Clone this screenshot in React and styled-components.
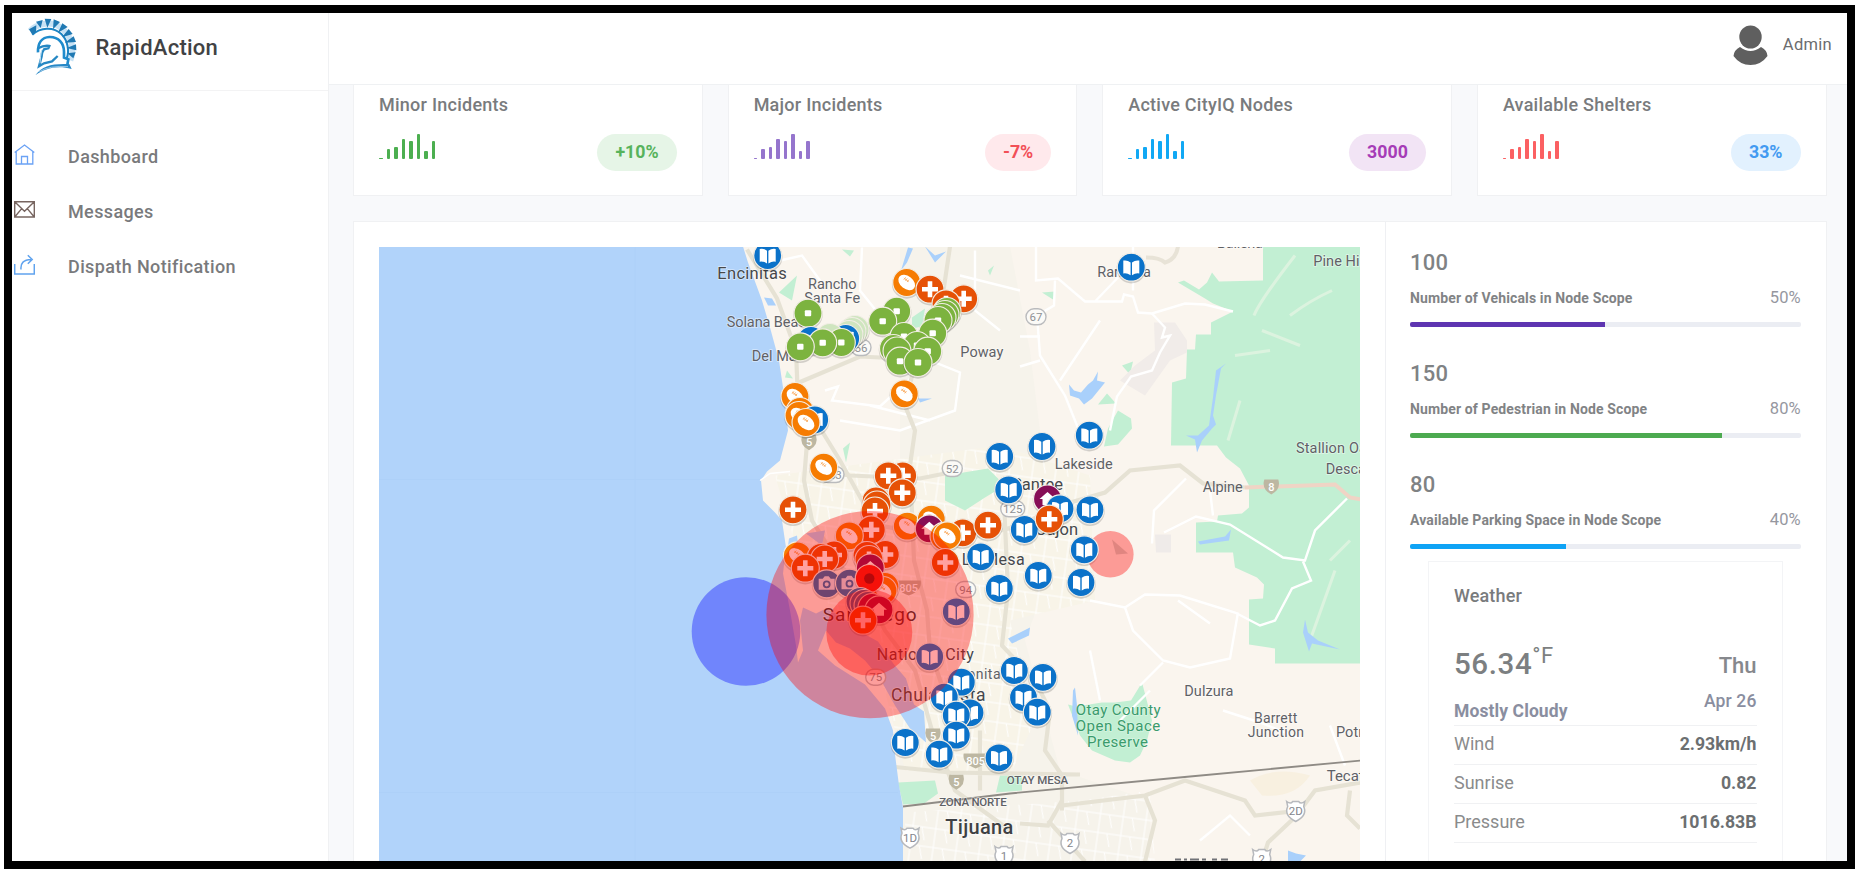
import React from "react";
import styled, { createGlobalStyle } from "styled-components";

const GlobalStyle = createGlobalStyle`
  * { box-sizing: border-box; }
  body { margin: 0; background: #fff; font-family: Roboto, "Liberation Sans", sans-serif; color: #727577; overflow: hidden; }
`;

const Frame = styled.div`
  display: flex;
  width: 1851px;
  height: 863.5px;
  margin: 5px 0 0 4px;
  border: 8px solid #000;
  background: #f8f9fb;
  overflow: hidden;
`;

const Sidebar = styled.aside`
  flex: 0 0 317px;
  background: #fff;
  border-right: 1px solid #f0f1f3;
`;

const Brand = styled.div`
  display: flex;
  align-items: flex-start;
  height: 78px;
  padding-left: 8px;
  border-bottom: 1px solid #f3f3f4;
`;

const BrandName = styled.div`
  margin: 19px 0 0 5.5px;
  font-size: 22px;
  line-height: 31px;
  letter-spacing: 0.25px;
  font-weight: 500;
  color: #414244;
`;

const Nav = styled.nav`
  padding-top: 37.5px;
`;

const NavItem = styled.a`
  display: flex;
  align-items: center;
  height: 55px;
  padding-left: 2px;
  font-size: 18px;
  font-weight: 500;
  letter-spacing: 0.38px;
  color: #797a7c;
  svg { flex: none; margin: -4px 33px 0 0; }
`;

const Main = styled.main`
  flex: 1;
  min-width: 0;
  display: flex;
  flex-direction: column;
`;

const TopBar = styled.header`
  display: flex;
  justify-content: flex-end;
  align-items: flex-start;
  flex: 0 0 72px;
  padding: 11.5px 15px 0 0;
  background: #fff;
  border-bottom: 1px solid #eff1f3;
`;

const UserName = styled.span`
  margin-left: 15px;
  padding-top: 8.5px;
  font-size: 16.5px;
  line-height: 24px;
  letter-spacing: 0.3px;
  color: #6b6c6e;
`;

const Content = styled.div`
  padding: 0 20.5px 0 24px;
`;

const Cards = styled.section`
  display: grid;
  grid-template-columns: repeat(4, 1fr);
  gap: 25px;
`;

const Card = styled.article`
  height: 111px;
  padding: 7.5px 25px 0 25px;
  background: #fff;
  border: 1px solid #f0f1f3;
  border-top: 0;
`;

const CardTitle = styled.div`
  font-size: 18px;
  line-height: 24px;
  font-weight: 500;
  letter-spacing: 0.25px;
  color: #797b7d;
`;

const CardRow = styled.div`
  display: flex;
  justify-content: space-between;
  margin-top: 17.5px;
`;

const Bars = styled.div`
  display: flex;
  align-items: flex-end;
  gap: 4px;
  height: 25px;
`;

const Bar = styled.i`
  width: 3.5px;
  height: ${(p) => p.$h}px;
  border-radius: 1px;
  background: ${(p) => p.$color};
`;

const Pill = styled.span`
  height: 37px;
  padding: 0 18px;
  border-radius: 19px;
  font-size: 17.8px;
  line-height: 36.5px;
  font-weight: 700;
  color: ${(p) => p.$color};
  background: ${(p) => p.$bg};
`;

const Panel = styled.section`
  display: flex;
  height: 680px;
  margin-top: 25px;
  background: #fff;
  border: 1px solid #f0f1f3;
`;

const MapColumn = styled.div`
  flex: 0 0 1032px;
  padding: 25px 25px 0 25px;
  border-right: 1px solid #eff0f3;
  > svg { display: block; }
`;

const StatsColumn = styled.div`
  flex: 1;
  padding: 26.5px 25px 0 24px;
`;

const Stat = styled.div`
  height: 111px;
`;

const StatValue = styled.div`
  font-size: 22px;
  line-height: 28px;
  font-weight: 500;
  letter-spacing: 0.3px;
  color: #7f8284;
`;

const StatLine = styled.div`
  display: flex;
  justify-content: space-between;
  align-items: baseline;
  margin: 9px 0 12.5px;
  height: 24px;
  line-height: 24px;
`;

const StatLabel = styled.span`
  font-size: 14px;
  font-weight: 700;
  letter-spacing: 0.13px;
  color: #818385;
`;

const StatPercent = styled.span`
  font-size: 16.5px;
  color: #96979f;
`;

const Track = styled.div`
  height: 5px;
  border-radius: 2px;
  background: #ebedf3;
  overflow: hidden;
`;

const Fill = styled.div`
  width: ${(p) => p.$value}%;
  height: 100%;
  background: ${(p) => p.$color};
`;

const Weather = styled.div`
  height: 400px;
  margin: -21px 18px 0;
  padding: 22px 25px 0;
  border: 1px solid #f3f4f6;
`;

const WeatherTitle = styled.div`
  font-size: 18px;
  line-height: 24px;
  font-weight: 500;
  letter-spacing: 0.15px;
  color: #797b7d;
`;

const WeatherNow = styled.div`
  display: flex;
  justify-content: space-between;
  height: 79px;
  margin-top: 38px;
`;

const Temperature = styled.div`
  display: flex;
  font-size: 29.5px;
  line-height: 36px;
  font-weight: 500;
  letter-spacing: 0.6px;
  color: #7c7f81;
`;

const Unit = styled.span`
  margin-top: -8px;
  font-size: 22px;
  font-weight: 400;
`;

const Condition = styled.div`
  margin-top: 17.5px;
  font-size: 17.5px;
  line-height: 24px;
  font-weight: 700;
  letter-spacing: 0.1px;
  color: #8a8ea0;
`;

const DayBlock = styled.div`
  padding-top: 6px;
  text-align: right;
`;

const Day = styled.div`
  font-size: 22px;
  line-height: 28px;
  font-weight: 500;
  color: #86888d;
`;

const DateText = styled.div`
  margin-top: 9px;
  font-size: 17.5px;
  line-height: 24px;
  font-weight: 500;
  letter-spacing: 0.15px;
  color: #8a8ea0;
`;

const WeatherRow = styled.div`
  display: flex;
  justify-content: space-between;
  align-items: center;
  height: 39.2px;
  padding-bottom: 2px;
  border-top: 1px solid #f0f1f3;
  font-size: 18px;
  color: #8a8b8c;
`;

const Reading = styled.b`
  font-weight: 700;
  font-size: 17.7px;
  color: #6c6f71;
`;

const SpartanLogo = () => (
  <svg width="70" height="70" viewBox="0 0 210 210" fill="none">
    <path d="M30 54 C48 34 92 20 125 46 C156 68 164 110 151 142" stroke="#c7e2f5" strokeWidth="18" />
    <path d="M37 65 C61 43 100 40 124 63 C143 81 149 115 140 136" stroke="#1c84c4" strokeWidth="6" />
    <g fill="#2079b3">
      <path d="M27 49 L49 37 L48 56 L37 65Z M48 26 L68 21 L62 45Z M74 17 L94 18 L82 44Z M101 19 L120 27 L99 49Z M127 31 L143 42 L114 59Z M146 48 L158 63 L126 73Z M161 70 L168 87 L134 89Z M168 94 L169 112 L140 105Z M167 118 L160 136 L142 121Z" />
    </g>
    <path d="M54 118 C53 88 67 73 88 72 C116 71 132 91 132 116 L132 134 L145 139 L142 155" stroke="#1f8bcc" strokeWidth="8" />
    <path d="M54 106 Q73 96 88 99 L85 106 L72 109 Q64 120 65 130 L57 160 L72 151 L96 145 L113 129" stroke="#2587c3" strokeWidth="7" />
    <path d="M65 111 Q61 129 60 151" stroke="#bfe0f4" strokeWidth="3" />
    <path d="M46 187 C66 157 98 151 148 153 L155 168 C112 156 74 166 46 187Z" fill="#2788c7" />
    <path d="M58 176 Q88 157 144 161" stroke="#cfe6f5" strokeWidth="2" />
  </svg>
);

const HomeIcon = () => (
  <svg width="21" height="21" viewBox="0 0 21 21" fill="none" stroke="#6ba2f5" strokeWidth="1.3">
    <path d="M.7 8.5 10.5 1 20.3 8.5M2.2 7.5V20H18.8V7.5M7.5 20V12.5H13.5V20" />
  </svg>
);

const MailIcon = () => (
  <svg width="21" height="21" viewBox="0 0 21 21" fill="none" stroke="#776560" strokeWidth="1.4">
    <path d="M.7 2.8H20.3V18H.7ZM.7 2.8 10.5 12.2 20.3 2.8M.7 18 7.7 9.6M20.3 18 13.3 9.6" />
  </svg>
);

const ShareIcon = () => (
  <svg width="21" height="21" viewBox="0 0 21 21" fill="none" stroke="#60a3ee" strokeWidth="1.5">
    <path d="M.7 10V20H20.3V10M7 15.5Q6 5.8 17 5.5M13.8 1.2 18.2 5.5 13.8 9.8" />
  </svg>
);

const Avatar = () => (
  <svg width="35" height="41" viewBox="0 0 35 41" fill="#5f5f5f">
    <ellipse cx="17.5" cy="12" rx="11.2" ry="11.5" />
    <path d="M7 22Q17.5 30 28 22Q34 25 34.5 31Q28 40 17.5 40Q7 40 .5 31Q1 25 7 22Z" />
  </svg>
);

const markers = [
  ["book", 767.7, 255], ["ball", 906.7, 282], ["cross", 963.7, 298.3], ["cross", 930, 288.7], ["cross", 946, 303.3],
  ["node", 808, 312.7], ["node", 896.7, 310.7], ["node", 882.7, 320.7],
  ["node", 947, 311], ["node", 945, 314], ["node", 942, 317], ["node", 938, 320], ["node", 932.7, 332.7],
  ["node", 904, 336], ["node", 917, 345], ["node", 893.5, 348], ["node", 897, 350.5], ["node", 927.7, 350.7],
  ["node", 900, 360.7], ["node", 918, 362],
  ["faded", 855, 329], ["faded", 852, 331], ["faded", 849, 334], ["book", 845.7, 338], ["faded", 830, 337], ["book", 811, 340],
  ["node", 841.3, 342], ["node", 822.7, 342.3], ["node", 800.3, 346.3],
  ["ball", 795, 396], ["ball", 800, 411], ["ball", 799, 415], ["book", 814.7, 419.3], ["ball", 806, 422],
  ["ball", 823.7, 466.7], ["ball", 904.3, 393.3],
  ["book", 1131.3, 266.7], ["book", 1089.3, 434.7], ["book", 1042, 446], ["book", 999.7, 456], ["book", 1008.7, 489.3],
  ["cross", 902.7, 475.3], ["cross", 888.3, 475.3], ["cross", 902.3, 492.3], ["cross", 793, 509.3],
  ["cross", 876, 500.5], ["cross", 877, 504.5], ["cross", 875, 510.5], ["cross", 871.3, 529.3],
  ["ball", 849.3, 535.3], ["ball", 907.3, 525.7], ["ball", 931.3, 518.7], ["home", 929.3, 528.3],
  ["cross", 962.7, 532.3], ["ball", 944, 535.8], ["ball", 947.3, 535.3], ["cross", 988, 524.7], ["cross", 945.3, 562],
  ["ball", 797.3, 555.3], ["cross", 834, 554.5], ["cross", 821, 557], ["cross", 824.7, 558.5], ["cross", 805.3, 567.7],
  ["cross", 885.3, 554], ["cross", 867, 555], ["cross", 869, 559], ["home", 870.3, 567.5],
  ["ball", 885, 586], ["ball", 883, 590], ["camera", 826.7, 583.3], ["camera", 849.5, 582.7], ["dot", 869.3, 578],
  ["camera", 860, 601], ["camera", 864, 603], ["camera", 868, 605], ["home", 872, 607], ["home", 879, 609.3], ["cross", 863, 619.7],
  ["home", 1047.5, 498.5], ["book", 1060, 508.3], ["book", 1090, 509.3], ["book", 1024.3, 529], ["cross", 1049.3, 518.7],
  ["book", 1084.3, 549.3], ["book", 1081, 582], ["book", 1038.3, 575], ["book", 980.7, 556.3], ["book", 999.3, 588],
  ["book", 956.3, 611.3], ["book", 929.7, 656.3], ["book", 961.3, 681.7], ["book", 944.3, 696.7],
  ["book", 970, 712.3], ["book", 956.3, 714.7], ["book", 956.3, 734.7], ["book", 905.3, 742], ["book", 939.3, 753.7], ["book", 999, 757.3],
  ["book", 1014.3, 670], ["book", 1043, 676.8], ["book", 1023.5, 697], ["book", 1037.3, 711.7],
];

const markerColor = {
  book: "#0b72c9", ball: "#f67c02", cross: "#e65106", node: "#7cb33f", faded: "#cfe5bf",
  home: "#870e56", camera: "#1b6cb0", dot: "#f01c10",
};

const glyphs = {
  book: <path d="M-8-6.6Q-4-7.4-.7-4.8V8Q-4.4 5.4-8 6.2ZM8-6.6Q4-7.4.7-4.8V8Q4.4 5.4 8 6.2Z" fill="#fff" />,
  ball: (
    <g transform="rotate(38)">
      <ellipse rx="9.4" ry="6.4" fill="#fff" />
      <path d="M-5-1.8H1M-4-3.4v3M-2-3.6v3M0-3.6v3" stroke="#f9b06a" strokeWidth=".9" />
    </g>
  ),
  cross: <path d="M-2.3-8H2.3V-2.3H8V2.3H2.3V8H-2.3V2.3H-8V-2.3H-2.3Z" fill="#fff" />,
  node: <rect x="-3.2" y="-3" width="6.4" height="6" rx="1" fill="#fff" />,
  faded: null,
  home: <path d="M0-7 8 0H5V6H-5V0H-8Z" fill="#fff" />,
  camera: (
    <g>
      <path d="M-8-5H-4L-2-7.5H2L4-5H8V6H-8Z" fill="#d8dff0" />
      <circle r="3" cy=".5" fill="none" stroke="#1b6cb0" strokeWidth="1.8" />
    </g>
  ),
  dot: <circle r="5.2" fill="#8b0d12" />,
};

const labels = [
  ["Encinitas", 717.3, 278.3, 16.5, 69.5], ["Rancho", 808, 288.3, 14.5, 48.5], ["Santa Fe", 804.3, 302.7, 14.5, 56],
  ["Solana Beach", 726.7, 326.7, 14.5, 87], ["Del Mar", 751.7, 360.3, 14.5, 50], ["Poway", 960.3, 356.7, 14.5, 43],
  ["Ramona", 1097.3, 276.7, 14.5, 53.5], ["Pine Hills", 1313.3, 265.3, 14.5, 61], ["Ballena", 1217, 247.6, 14.5, 46],
  ["Stallion Oaks", 1296, 452, 14.5, 86], ["Descanso", 1325.7, 473.7, 14.5, 64], ["Lakeside", 1054.7, 468.7, 14.5, 58],
  ["Santee", 1012, 489.3, 16.5, 51], ["El Cajon", 1018, 534, 16.5, 60], ["La Mesa", 961.7, 564, 16, 63],
  ["Alpine", 1202.7, 491.7, 14.5, 40], ["San Diego", 822.7, 620.7, 19, 94], ["National City", 876.8, 659.3, 16, 97],
  ["Bonita", 958, 678, 14, 42.5], ["Chula Vista", 891, 700.7, 17.5, 94.5], ["Dulzura", 1184.3, 695.3, 14.5, 49],
  ["Barrett", 1254, 722.7, 14, 43.3], ["Junction", 1247.7, 736.7, 14, 56.3], ["Potrero", 1336, 736.7, 14.5, 48], ["Tecate", 1326.7, 780.7, 15, 45],
];

const parkLabels = [["Otay County", 1075.7, 714.7, 85], ["Open Space", 1075.7, 730.3, 84.5], ["Preserve", 1087, 746, 61]];

const routes = [
  ["52", 952.3, 468], ["56", 861, 347], ["67", 1036, 316.3], ["94", 965.7, 589], ["125", 1012.7, 508.3], ["75", 875.7, 676.7], ["163", 832, 474],
];

const shields = [
  ["5", 809, 441.7], ["805", 908.7, 587], ["5", 933, 735], ["5", 956.3, 781.3], ["805", 975.7, 760], ["8", 1271.3, 486],
];

const mxShields = [["1D", 910, 836.7], ["1", 1004, 855], ["2", 1070, 842], ["2D", 1295.7, 810], ["2", 1261.7, 858]];

const CityMap = () => (
  <svg width="981" height="613.5" viewBox="379 246.5 981 613.5" fontFamily="Roboto, sans-serif">
    <defs>
      <pattern id="streets" width="23" height="19" patternUnits="userSpaceOnUse" patternTransform="rotate(8)">
        <path d="M0 6H23M7 0V19M16 6L20 19" stroke="#fff" strokeWidth="1" fill="none" />
      </pattern>
    </defs>
    <rect x="379" y="246" width="981" height="615" fill="#faf5ee" />
    <path d="M743 246H1010L1030 350 1045 470 1055 560 1025 640 1060 770 1150 800V861H900V246Z" fill="#f6f3eb" />
    <path d="M775 475 1000 445 1090 475 1095 600 1010 620 1035 720 1010 775 905 770 885 690 800 560Z" fill="#f8f4e8" />
    <path d="M775 475 1000 445 1090 475 1095 600 1010 620 1035 720 1010 775 905 770 885 690 800 560ZM905 812 1080 800 1150 790 1155 861H905Z" fill="url(#streets)" />

    <g fill="#c2efd3">
      <path d="M1263 246V280L1219 281 1212 272 1207 282 1199 289 1184 280 1178 282 1205 298 1213 303 1233 311 1211 322V334H1196L1195 349H1187L1186 378 1172 382 1171 445H1217L1226 457 1240 468 1249 485V507L1242 513 1218 515 1217 521 1196 522V552H1233L1235 567 1257 577 1264 584 1263 598 1249 599V644L1275 648V663H1361V246Z" />
      <path d="M1142 682 1131 700 1115 702 1102 702 1076 706 1068 704 1080 735 1092 750 1115 760 1130 762 1140 755 1147 740 1152 720Z" />
      <path d="M1118 410 1131 418 1132 428 1118 444 1104 446 1108 428Z M1107 393 1116 403 1098 404Z M1122 365 1133 361 1130 374Z M1042 292 1055 291 1053 299Z" />
      <path d="M945 475 988 468 1005 485 985 497 965 510 945 500Z M898 782 935 780 938 793 924 803 903 804Z M1000 775 1022 775 1022 790 996 792Z" />
      <path d="M912 317 925 308 922 326 912 328Z M779 292 797 275 792 300Z M842 249 854 250 850 256Z M988 270 994 265 990 275Z M787 370 793 378 785 377Z M843 448 850 442 846 462Z" />
    </g>
    <g fill="none" stroke="#dcf3df" strokeWidth="3">
      <path d="M1295 255Q1260 300 1254 315M1332 290Q1310 300 1290 315M1262 330 1300 345M1235 355 1270 350M1310 640 1335 570M1330 560 1350 540M1240 400 1228 440" />
    </g>
    <path d="M1154 322H1175L1187 340V352L1170 360 1145 395 1120 380 1135 365 1155 350Z" fill="#f1ece9" />
    <path d="M1155 534H1171V552H1156Z" fill="#efebe9" />
    <path d="M1250 780Q1275 765 1310 775 1295 798 1262 795Z" fill="#f8f0e0" />

    <g fill="none" stroke="#fff" strokeWidth="2.4">
      <path d="M1036 246V280L1058 278 1085 301 1122 301 1124 294 1133 296 1138 312 1152 313 1185 303 1205 304 1233 311M1095 301 1118 277" />
      <path d="M1133 290V246M1055 280 1054 305 1037 315 1040 355 1065 395 1087 450M1152 313 1165 327 1162 337 1170 335 1160 352 1152 370 1131 376 1117 396 1110 430M1020 336H1040M1020 366 1040 360" />
      <path d="M1152 543 1154 510 1186 478M1164 532 1196 516 1230 524 1283 557 1305 560 1315 530 1347 498M1303 561 1311 580 1292 588 1275 620 1260 625 1235 612 1180 595 1145 594 1125 607 1090 600" />
      <path d="M1125 607 1133 630 1163 660 1190 667 1230 658 1238 612M1163 662 1140 685M1210 490 1213 515M1178 600 1210 623M1223 710 1260 722 1300 738M1330 725 1345 765" />
      <path d="M780 260 802 255 820 280M862 247 860 290 880 315M975 250 975 310 1000 330M825 390 838 386 832 400 880 406 930 360 960 372 955 410 900 430 840 420M870 405 930 420M960 275 1020 290M1060 380 1100 320" />
      <path d="M1200 840 1230 815 1250 835M1100 700 1090 650M1150 690 1120 720" />
    </g>

    <g fill="none" stroke="#e6e2d4" strokeWidth="4.2">
      <path d="M747 249 777 298 796 350 798 400 808 430 804 480 812 520 840 565 865 590 885 630 915 670 932 730 955 790 1010 830" />
      <path d="M950 246 942 300 918 350 905 405 915 430 910 465 914 560 927 610 930 650 947 700" />
      <path d="M799 382 860 356 900 358M800 395 840 460 862 500 880 525 960 540 1020 525 1060 505 1105 492 1130 470 1180 465 1203 483 1245 487" />
      <path d="M812 470 850 475 920 478 960 470M1003 480 1008 590 1002 645 1035 680 1050 710 1045 750 1062 775V810M880 765 950 772 1080 774M980 730 980 790" />
      <path d="M1062 805 1145 795 1185 780 1245 800 1255 815 1300 810 1315 790 1360 782M1145 795 1155 820 1145 861M1300 812 1268 842 1262 861M1048 820 1085 861M1020 823 1048 825 1062 800M1350 790 1347 815 1360 828" />
    </g>
    <path d="M1178 246Q1176 259 1165 262Q1160 257 1146 257" fill="none" stroke="#e8e3d7" strokeWidth="4" />
    <path d="M1245 487 1335 484 1350 497 1361 499" fill="none" stroke="#efd4c5" strokeWidth="4" />

    <g fill="#a9d0fb">
      <path d="M1069 384 1070 395 1079 398 1084 404 1092 398 1105 382 1097 380 1098 371 1093 380 1088 384 1081 392 1074 390Z" />
      <path d="M1226 363 1216 370 1213 397 1209 425 1198 435 1186 435 1195 439 1197 452 1202 440 1212 428 1216 424 1213 415 1216 395 1221 368Z" />
      <path d="M1198 541 1225 536 1231 529 1229 540 1200 544Z M1305 619 1303 632 1309 651 1312 643 1340 649 1318 640 1308 632Z M1008 638 1030 627 1029 635 1012 643Z" />
      <path d="M1075 687 1077 705 1078 735 1072 715 1073 690ZM764 297 772 298 776 305 768 305Z M908 247 913 248 907 262 901 270Z M925 246 935 255 946 251 935 262Z M918 398 932 398 920 402Z M1288 850 1296 853 1306 855 1300 861H1288Z" />
    </g>

    <path d="M379 246H743L748 262 762 300 770 327 779 360 783 387 788 430 780 460 767 471 761 480 763 500 775 512 782 520 786 547 783 573 790 610 796 645 798 662 803 650 800 620 803 607 816 613 826 608 842 616 858 630 878 641 894 664 906 678 914 704 924 711 926 742 910 728 895 705 880 678 865 660 850 648 836 642 826 630 818 650 835 665 865 684 885 708 893 730 895 754 899 785 903 807V861H379Z" fill="#b1d3fa" />
    <path d="M789 538 797 535 798 544 788 545Z M806 533 825 530 822 545Z" fill="#b1d3fa" />
    <path d="M760 480 770 473 790 471" fill="none" stroke="#fff" strokeWidth="1.5" />
    <path d="M379 479H760M379 792H898M635 247V860" stroke="#add0f8" strokeWidth="1" />
    <path d="M903 806 1010 793 1190 776 1361 760" fill="none" stroke="#8f8b85" strokeWidth="1.8" />

    <g fill="#fbfaf7" stroke="#babbbd" strokeWidth="1.4" fontSize="11.5" textAnchor="middle">
      {routes.map(([t, x, y]) => (
        <g key={t} transform={`translate(${x} ${y})`}>
          <rect x={t.length > 2 ? -12 : -10} y="-8" width={t.length > 2 ? 24 : 20} height="16" rx="8" />
          <text y="4" fill="#8f9195" stroke="none">{t}</text>
        </g>
      ))}
    </g>
    <g fill="#bdb7a2" fontSize="11" fontWeight="500" textAnchor="middle">
      {shields.map(([t, x, y], i) => (
        <g key={i} transform={`translate(${x} ${y})`}>
          <path d={t.length > 1 ? "M-12-7H12Q14 3 0 8Q-14 3-12-7Z" : "M-7-7H7Q10 3 0 8Q-10 3-7-7Z"} />
          <text y="4" fill="#fff">{t}</text>
        </g>
      ))}
    </g>
    <g fill="#fff" stroke="#b7b9bd" strokeWidth="1.5" fontSize="11.5" textAnchor="middle">
      {mxShields.map(([t, x, y], i) => (
        <g key={i} transform={`translate(${x} ${y})`}>
          <path d="M-9-9Q-5-6-3-9H3Q5-6 9-9L8-4Q12 5 0 11Q-12 5-8-4Z" />
          <text y="4.5" fill="#84868c" stroke="none">{t}</text>
        </g>
      ))}
    </g>

    <g fill="#5f6166" stroke="#fff" strokeOpacity=".5" strokeWidth="1.6" paintOrder="stroke">
      {labels.map(([t, x, y, size, w]) => (
        <text key={t} x={x} y={y} fontSize={size} textLength={w} fill={size > 18 ? "#333537" : size > 15.5 ? "#46484b" : undefined}>{t}</text>
      ))}
      <text x="1006.7" y="783.3" fontSize="11.5" fontWeight="500" textLength="61.5">OTAY MESA</text>
      <text x="939.3" y="805.3" fontSize="11.5" fontWeight="500" textLength="67.5">ZONA NORTE</text>
      <text x="945.3" y="833.5" fontSize="20" fontWeight="500" textLength="68" fill="#3f4144">Tijuana</text>
      {parkLabels.map(([t, x, y, w]) => (
        <text key={t} x={x} y={y} fontSize="15" textLength={w} fill="#3a9b6c" strokeOpacity=".3">{t}</text>
      ))}
    </g>
    <path d="M1175 859h6m3 0h3m3 0h9m3 0h4m6 0h5m4 0h7" stroke="#707277" strokeWidth="2" />

    {markers.map(([kind, x, y], i) => (
      <g key={i} transform={`translate(${x} ${y})`}>
        <circle r="14.8" cy="1.4" fill="#000" opacity=".16" />
        <circle r="14" fill={markerColor[kind]} stroke="#f3eee6" strokeWidth="1.2" />
        {glyphs[kind]}
      </g>
    ))}

    <g fillOpacity=".37">
      <circle cx="746" cy="631" r="54.3" fill="#00f" />
      <circle cx="870" cy="614.2" r="103.6" fill="#f00" />
      <circle cx="869.3" cy="632" r="43" fill="#f00" />
      <circle cx="1110.3" cy="553.7" r="23.3" fill="#f00" />
    </g>
    <path d="M1112 539 1128 553 1116 554Z" fill="#d87f7a" opacity=".8" />
    <g transform="translate(1084.3 549.3)">
      <circle r="14" fill={markerColor.book} stroke="#f3eee6" strokeWidth="1.2" />
      {glyphs.book}
    </g>
  </svg>
);

const cards = [
  { title: "Minor Incidents", color: "#4caf50", badge: "+10%", fg: "#57b35c", bg: "#e6f5e7" },
  { title: "Major Incidents", color: "#9575cd", badge: "-7%", fg: "#f24f57", bg: "#ffe9ec" },
  { title: "Active CityIQ Nodes", color: "#11a8f4", badge: "3000", fg: "#a63cb7", bg: "#f2e4f5" },
  { title: "Available Shelters", color: "#fb6062", badge: "33%", fg: "#429af1", bg: "#e2f1fe" },
];

const barHeights = [1.5, 10, 12.5, 20, 18.5, 25, 8.5, 18.5];

const stats = [
  { value: "100", label: "Number of Vehicals in Node Scope", percent: 50, color: "#5e35b1" },
  { value: "150", label: "Number of Pedestrian in Node Scope", percent: 80, color: "#4caa50" },
  { value: "80", label: "Available Parking Space in Node Scope", percent: 40, color: "#0fa3f5" },
];

const readings = [["Wind", "2.93km/h"], ["Sunrise", "0.82"], ["Pressure", "1016.83B"], ["", ""]];

export default function App() {
  return (
    <>
      <GlobalStyle />
      <Frame>
        <Sidebar>
          <Brand>
            <SpartanLogo />
            <BrandName>RapidAction</BrandName>
          </Brand>
          <Nav>
            <NavItem><HomeIcon />Dashboard</NavItem>
            <NavItem><MailIcon />Messages</NavItem>
            <NavItem><ShareIcon />Dispath Notification</NavItem>
          </Nav>
        </Sidebar>
        <Main>
          <TopBar>
            <Avatar />
            <UserName>Admin</UserName>
          </TopBar>
          <Content>
            <Cards>
              {cards.map((c) => (
                <Card key={c.title}>
                  <CardTitle>{c.title}</CardTitle>
                  <CardRow>
                    <Bars>
                      {barHeights.map((h, i) => <Bar key={i} $h={h} $color={c.color} />)}
                    </Bars>
                    <Pill $color={c.fg} $bg={c.bg}>{c.badge}</Pill>
                  </CardRow>
                </Card>
              ))}
            </Cards>
            <Panel>
              <MapColumn><CityMap /></MapColumn>
              <StatsColumn>
                {stats.map((s) => (
                  <Stat key={s.label}>
                    <StatValue>{s.value}</StatValue>
                    <StatLine>
                      <StatLabel>{s.label}</StatLabel>
                      <StatPercent>{s.percent}%</StatPercent>
                    </StatLine>
                    <Track><Fill $value={s.percent} $color={s.color} /></Track>
                  </Stat>
                ))}
                <Weather>
                  <WeatherTitle>Weather</WeatherTitle>
                  <WeatherNow>
                    <div>
                      <Temperature>56.34<Unit>°F</Unit></Temperature>
                      <Condition>Mostly Cloudy</Condition>
                    </div>
                    <DayBlock>
                      <Day>Thu</Day>
                      <DateText>Apr 26</DateText>
                    </DayBlock>
                  </WeatherNow>
                  {readings.map(([name, value]) => (
                    <WeatherRow key={name}><span>{name}</span><Reading>{value}</Reading></WeatherRow>
                  ))}
                </Weather>
              </StatsColumn>
            </Panel>
          </Content>
        </Main>
      </Frame>
    </>
  );
}
